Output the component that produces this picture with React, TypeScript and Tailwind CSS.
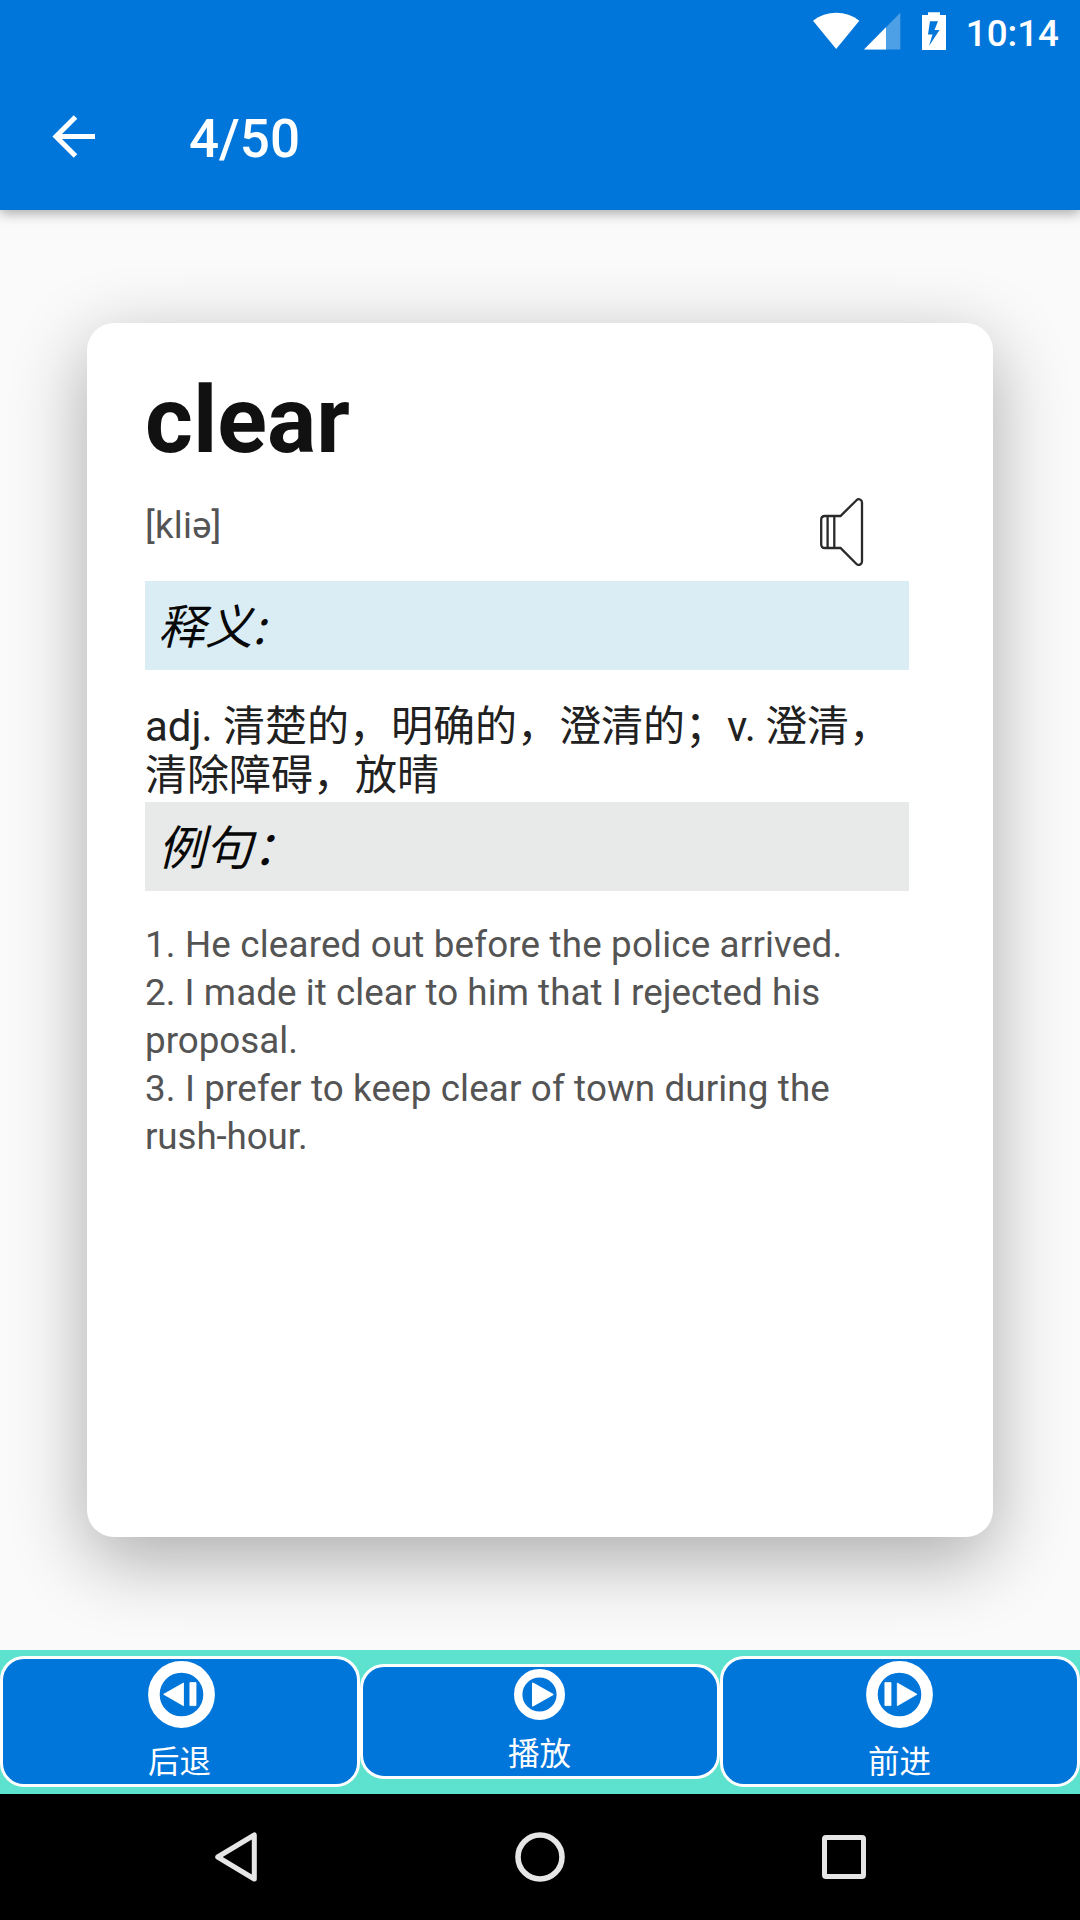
import React from 'react';

function StatusBar() {
  return (
    <div className="flex h-[63px] items-start justify-end pr-[21px]">
      <svg className="mt-[12px] h-[38px] w-[47px]" viewBox="0 0 47 38" fill="#fff">
        <path d="M0 8.7C13-2 33.5-2 46.3 8.7L23.2 37z" />
      </svg>
      <svg className="mt-[12px] ml-[4px] h-[38px] w-[37px]" viewBox="0 0 37 38">
        <path d="M36.3 0.8V37.4H0z" fill="#fff" fillOpacity="0.3" />
        <path d="M22 15.2V37.4H0z" fill="#fff" />
      </svg>
      <svg className="mt-[12px] ml-[21px] h-[38px] w-[24px]" viewBox="0 0 24 38">
        <path
          d="M6 0.3H18V3H24V38H0V3H6z M8 9.3L6 22.5H10.5L7 34L17.5 18H12.5L16 9.3z"
          fill="#fff"
          fillRule="evenodd"
        />
      </svg>
      <span className="mt-[12px] ml-[20px] text-[36.75px] leading-[43px] font-medium">10:14</span>
    </div>
  );
}

function SectionTitle({ text, tone }: { text: string; tone: string }) {
  return (
    <h2
      className={`h-[89px] pt-[15px] pl-[13px] font-['Noto_Sans_CJK_SC',sans-serif] text-[47.25px] leading-[56px] italic text-[#080808] ${tone}`}
    >
      {text}
    </h2>
  );
}

function Speaker() {
  return (
    <svg className="h-[70px] w-[44px]" viewBox="0 0 44 70" fill="none" stroke="#2b292a" strokeWidth="2.3">
      <path d="M5 19H20.5L36.5 3.2C38.5 1.2 42 2.5 42 5.5V64.5C42 67.5 38.5 69 36.5 67L20.5 51H5Q1.2 51 1.2 47.2V22.8Q1.2 19 5 19zM7.6 19V51M14.3 19V51" />
    </svg>
  );
}

function BackIcon() {
  return (
    <svg className="ml-[3px] h-[67px] w-[67px]" viewBox="0 0 67 67">
      <circle cx="33.5" cy="33.5" r="27.6" fill="none" stroke="#fff" strokeWidth="11.6" />
      <path d="M15.6 33.3L35.5 22V44.7zM41.9 21.6H48V44.6H41.9z" fill="#fff" stroke="#fff" strokeWidth="0.8" strokeLinejoin="round" />
    </svg>
  );
}

function PlayIcon() {
  return (
    <svg className="mr-[1px] h-[51px] w-[51px]" viewBox="0 0 51 51">
      <circle cx="25.5" cy="25.5" r="21.3" fill="none" stroke="#fff" strokeWidth="8.4" />
      <path d="M19 14.5L38.5 25.5L19 36.5z" fill="#fff" stroke="#fff" strokeWidth="2" strokeLinejoin="round" />
    </svg>
  );
}

function ForwardIcon() {
  return (
    <svg className="mr-[2px] h-[67px] w-[67px]" viewBox="0 0 67 67">
      <circle cx="33.5" cy="33.5" r="27.6" fill="none" stroke="#fff" strokeWidth="11.6" />
      <path d="M51 33.3L31.3 22V44.7zM18.9 21.6H25V44.6H18.9z" fill="#fff" stroke="#fff" strokeWidth="0.8" strokeLinejoin="round" />
    </svg>
  );
}

function ControlButton({ label, size, children }: { label: string; size: string; children: React.ReactNode }) {
  return (
    <button
      className={`flex flex-1 flex-col items-center rounded-[24px] border-[3px] border-white bg-[#0076db] pt-[2px] text-[31.5px] leading-[37px] text-white ${size}`}
    >
      {children}
      <span className="mt-[16px] mr-[1px]">{label}</span>
    </button>
  );
}

export default function App() {
  return (
    <div className="flex h-[1920px] w-[1080px] flex-col overflow-hidden bg-[#fafafa] font-[Roboto,'Noto_Sans_CJK_SC',sans-serif]">
      <header className="z-10 h-[210px] shrink-0 bg-[#0076db] text-white shadow-[0_3px_12px_rgba(0,0,0,0.34)]">
        <StatusBar />
        <div className="flex h-[147px] items-start pl-[52px]">
          <svg className="mt-[52px] h-[43px] w-[44px]" viewBox="0 0 44 43" fill="none" stroke="#fff" strokeWidth="5">
            <path d="M43 21.5H4M23.5 2L4 21.5L23.5 41" />
          </svg>
          <h1 className="mt-[45px] ml-[93px] text-[53px] leading-[63px] font-medium">4/50</h1>
        </div>
      </header>

      <main className="flex-1 px-[87px] pt-[113px]">
        <section className="h-[1214px] rounded-[27px] bg-white pt-[44px] pr-[84px] pl-[58px] shadow-[0_22px_76px_rgba(0,0,0,0.32)]">
          <h2 className="text-[92px] leading-[108px] font-bold text-[#111]">clear</h2>
          <div className="flex h-[106px] items-start justify-between pr-[45px]">
            <span className="mt-[29px] text-[36.75px] leading-[43px] tracking-[0.2px] text-[#545454]">[kliə]</span>
            <div className="mt-[22px]">
              <Speaker />
            </div>
          </div>
          <SectionTitle text="释义:" tone="bg-[#daedf5]" />
          <p className="mt-[32px] mb-[2px] text-[42px] leading-[49px] text-[#212121]">
            adj. 清楚的，明确的，澄清的；<span className="tracking-[-0.6px]">v. </span>澄清，
            <br />
            清除障碍，放晴
          </p>
          <SectionTitle text="例句：" tone="bg-[#e7eae9]" />
          <div className="mt-[30px] text-[36.75px] leading-[48px] whitespace-nowrap text-[#545454]">
            <p className="tracking-[0.17px]">1. He cleared out before the police arrived.</p>
            <p className="tracking-[0.055px]">2. I made it clear to him that I rejected his</p>
            <p>proposal.</p>
            <p className="tracking-[0.14px]">3. I prefer to keep clear of town during the</p>
            <p className="tracking-[-0.1px]">rush-hour.</p>
          </div>
        </section>
      </main>

      <div className="z-10 flex h-[144px] shrink-0 items-center bg-[#5ce2ce] pb-[1px]">
        <ControlButton label="后退" size="h-[131px]">
          <BackIcon />
        </ControlButton>
        <ControlButton label="播放" size="h-[115px]">
          <PlayIcon />
        </ControlButton>
        <ControlButton label="前进" size="h-[131px]">
          <ForwardIcon />
        </ControlButton>
      </div>

      <nav className="z-10 flex h-[126px] shrink-0 items-center justify-between bg-black px-[214px]">
        <svg className="h-[52px] w-[44px]" viewBox="0 0 44 52" fill="none" stroke="#e6e6e6" strokeWidth="5" strokeLinejoin="round">
          <path d="M40.3 4V48L3.7 26z" />
        </svg>
        <svg className="h-[50px] w-[50px]" viewBox="0 0 50 50">
          <circle cx="25" cy="25" r="22" fill="none" stroke="#e6e6e6" strokeWidth="5.6" />
        </svg>
        <div className="h-[44px] w-[44px] rounded-[4px] border-[5px] border-[#e6e6e6]" />
      </nav>
    </div>
  );
}
